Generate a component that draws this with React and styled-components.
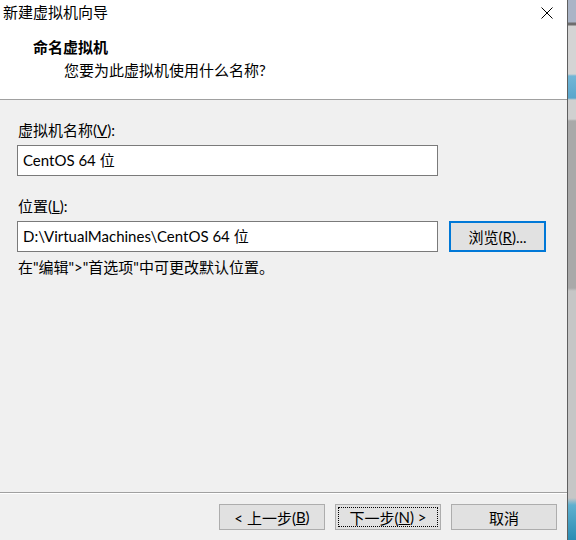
import React from "react";
import styled, { createGlobalStyle } from "styled-components";

const GlobalStyle = createGlobalStyle`
  html, body {
    margin: 0;
    padding: 0;
  }
  body {
    font-family: "Lato", "Noto Sans CJK SC", sans-serif;
    color: #000;
    background: #c6c6c6;
  }
`;

const Screen = styled.div`
  display: flex;
  width: 576px;
  height: 540px;
  overflow: hidden;
`;

const Window = styled.div`
  width: 568px;
  height: 540px;
  box-sizing: border-box;
  border-right: 1px solid #5f5f5f;
  background: #f0f0f0;
  display: flex;
  flex-direction: column;
`;

const Desktop = styled.div`
  flex: 1;
  background: linear-gradient(
    to bottom,
    #aab4c6 0px,
    #aab4c6 22px,
    #6e6e6e 23px,
    #6e6e6e 25px,
    #d4d4d4 26px,
    #d4d4d4 74px,
    #72b6d6 76px,
    #5aa6cc 98px,
    #d0d0d0 100px,
    #d0d0d0 119px,
    #a9a9a9 121px,
    #a9a9a9 288px,
    #c6c6c6 291px,
    #c6c6c6 498px,
    #5fb0cf 505px,
    #2b8cb3 540px
  );
`;

const Header = styled.div`
  height: 100px;
  box-sizing: border-box;
  background: #fff;
  border-bottom: 1px solid #a0a0a0;
  display: flex;
  flex-direction: column;
  flex-shrink: 0;
`;

const TitleBar = styled.div`
  height: 25px;
  display: flex;
  align-items: center;
  justify-content: space-between;
  padding: 0 14px 0 3px;
`;

const Title = styled.span`
  font-size: 15px;
  line-height: 25px;
`;

const CloseButton = styled.span`
  display: flex;
  width: 12px;
  height: 12px;
`;

const Heading = styled.div`
  font-size: 15px;
  font-weight: bold;
  line-height: 20px;
  margin-top: 12px;
  padding-left: 33px;
`;

const SubHeading = styled.div`
  font-size: 15px;
  line-height: 20px;
  margin-top: 3px;
  padding-left: 64px;
`;

const Body = styled.div`
  flex: 1;
  padding: 20px 0 0 17px;
  display: flex;
  flex-direction: column;
`;

const Label = styled.div`
  font-size: 15px;
  line-height: 20px;
  margin: ${(p) => p.$top || 0}px 0 5px 1px;
`;

const Row = styled.div`
  display: flex;
  gap: 11px;
`;

const TextBox = styled.div`
  width: 421px;
  height: 31px;
  box-sizing: border-box;
  border: 1px solid #7a7a7a;
  background: #fff;
  font-size: 15px;
  line-height: 29px;
  padding-left: 5px;
  white-space: nowrap;
`;

const Button = styled.div`
  width: ${(p) => p.$w || 106}px;
  height: ${(p) => p.$h || 26}px;
  box-sizing: border-box;
  border: ${(p) => (p.$accent ? "2px solid #0078d7" : "1px solid #adadad")};
  background: #e1e1e1;
  font-size: 15px;
  display: flex;
  align-items: center;
  justify-content: center;
  position: relative;
  white-space: nowrap;
`;

const FocusRing = styled.span`
  position: absolute;
  inset: 2px;
  border: 1px dotted #000;
  pointer-events: none;
`;

const Hint = styled.div`
  font-size: 15px;
  line-height: 20px;
  margin-top: 5px;
  padding-left: 1px;
`;

const Footer = styled.div`
  height: 48px;
  box-sizing: border-box;
  flex-shrink: 0;
  border-top: 1px solid #a0a0a0;
  box-shadow: inset 0 1px 0 #fff;
  display: flex;
  justify-content: flex-end;
  align-items: flex-start;
  gap: 10px;
  padding: 11px 10px 0 0;
`;

export default function App() {
  return (
    <>
      <GlobalStyle />
      <Screen>
        <Window>
          <Header>
            <TitleBar>
              <Title>新建虚拟机向导</Title>
              <CloseButton>
                <svg width="12" height="12" viewBox="0 0 12 12">
                  <path d="M0.5 0.5 L11.5 11.5 M11.5 0.5 L0.5 11.5" stroke="#000" strokeWidth="1" />
                </svg>
              </CloseButton>
            </TitleBar>
            <Heading>命名虚拟机</Heading>
            <SubHeading>您要为此虚拟机使用什么名称?</SubHeading>
          </Header>
          <Body>
            <Label>
              虚拟机名称(<u>V</u>):
            </Label>
            <TextBox>CentOS 64 位</TextBox>
            <Label $top={20}>
              位置(<u>L</u>):
            </Label>
            <Row>
              <TextBox>D:\VirtualMachines\CentOS 64 位</TextBox>
              <Button $accent $w={97} $h={31}>
                浏览(<u>R</u>)...
              </Button>
            </Row>
            <Hint>在"编辑"&gt;"首选项"中可更改默认位置。</Hint>
          </Body>
          <Footer>
            <Button>
              &lt; 上一步(<u>B</u>)
            </Button>
            <Button>
              <FocusRing />
              下一步(<u>N</u>) &gt;
            </Button>
            <Button>取消</Button>
          </Footer>
        </Window>
        <Desktop />
      </Screen>
    </>
  );
}
